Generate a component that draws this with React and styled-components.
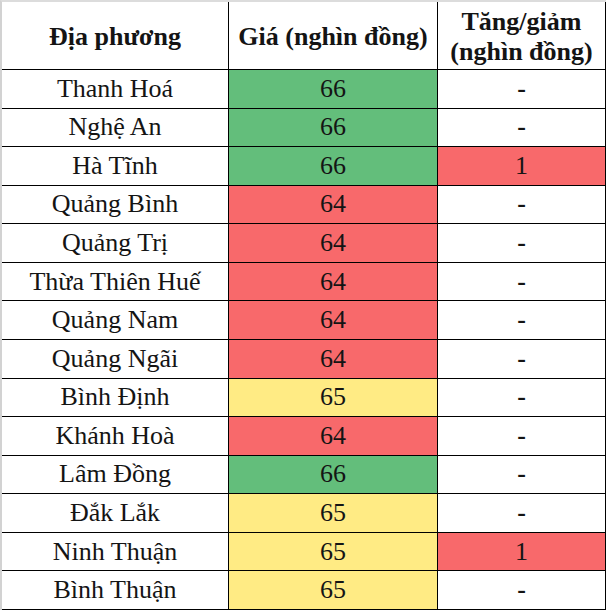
import React from 'react';
import styled, { createGlobalStyle } from 'styled-components';

const GlobalStyle = createGlobalStyle`
  html, body {
    margin: 0;
    padding: 0;
    background: #ffffff;
  }
`;

// Excel-like color scale fills
const fills = {
  green: '#63be7b',
  red: '#f8696b',
  yellow: '#ffeb84',
  none: '#ffffff',
};

const rows = [
  { name: 'Thanh Hoá', price: 66, color: 'green', change: '-' },
  { name: 'Nghệ An', price: 66, color: 'green', change: '-' },
  { name: 'Hà Tĩnh', price: 66, color: 'green', change: '1' },
  { name: 'Quảng Bình', price: 64, color: 'red', change: '-' },
  { name: 'Quảng Trị', price: 64, color: 'red', change: '-' },
  { name: 'Thừa Thiên Huế', price: 64, color: 'red', change: '-' },
  { name: 'Quảng Nam', price: 64, color: 'red', change: '-' },
  { name: 'Quảng Ngãi', price: 64, color: 'red', change: '-' },
  { name: 'Bình Định', price: 65, color: 'yellow', change: '-' },
  { name: 'Khánh Hoà', price: 64, color: 'red', change: '-' },
  { name: 'Lâm Đồng', price: 66, color: 'green', change: '-' },
  { name: 'Đắk Lắk', price: 65, color: 'yellow', change: '-' },
  { name: 'Ninh Thuận', price: 65, color: 'yellow', change: '1' },
  { name: 'Bình Thuận', price: 65, color: 'yellow', change: '-' },
];

const Sheet = styled.div`
  display: grid;
  grid-template-columns: 227px 209px 168px;
  grid-template-rows: 68px repeat(14, 1fr);
  width: 604px;
  height: 608px;
  border-left: 2px solid #d2d2d2;
  border-top: 2px solid #dcdcdc;
  font-family: 'Liberation Serif', Tinos, 'Times New Roman', 'DejaVu Serif', serif;
  color: #141414;
`;

const Cell = styled.div`
  display: flex;
  align-items: center;
  justify-content: center;
  text-align: center;
  border-right: 1px solid #000;
  border-bottom: 1px solid #000;
  background: ${(p) => fills[p.$fill || 'none']};
  font-size: 26px;
  line-height: 1;
  white-space: nowrap;
  box-sizing: border-box;
`;

const HeadCell = styled(Cell)`
  font-weight: 700;
  line-height: 30px;
  padding-top: 2px;
  white-space: normal;
`;

const Dash = styled.span`
  font-weight: 700;
`;

export default function App() {
  return (
    <>
      <GlobalStyle />
      <Sheet>
        <HeadCell>Địa phương</HeadCell>
        <HeadCell>Giá (nghìn đồng)</HeadCell>
        <HeadCell>
          Tăng/giảm
          <br />
          (nghìn đồng)
        </HeadCell>
        {rows.map((r) => (
          <React.Fragment key={r.name}>
            <Cell>{r.name}</Cell>
            <Cell $fill={r.color}>{r.price}</Cell>
            <Cell $fill={r.change === '-' ? 'none' : 'red'}>
              {r.change === '-' ? <Dash>-</Dash> : r.change}
            </Cell>
          </React.Fragment>
        ))}
      </Sheet>
    </>
  );
}
